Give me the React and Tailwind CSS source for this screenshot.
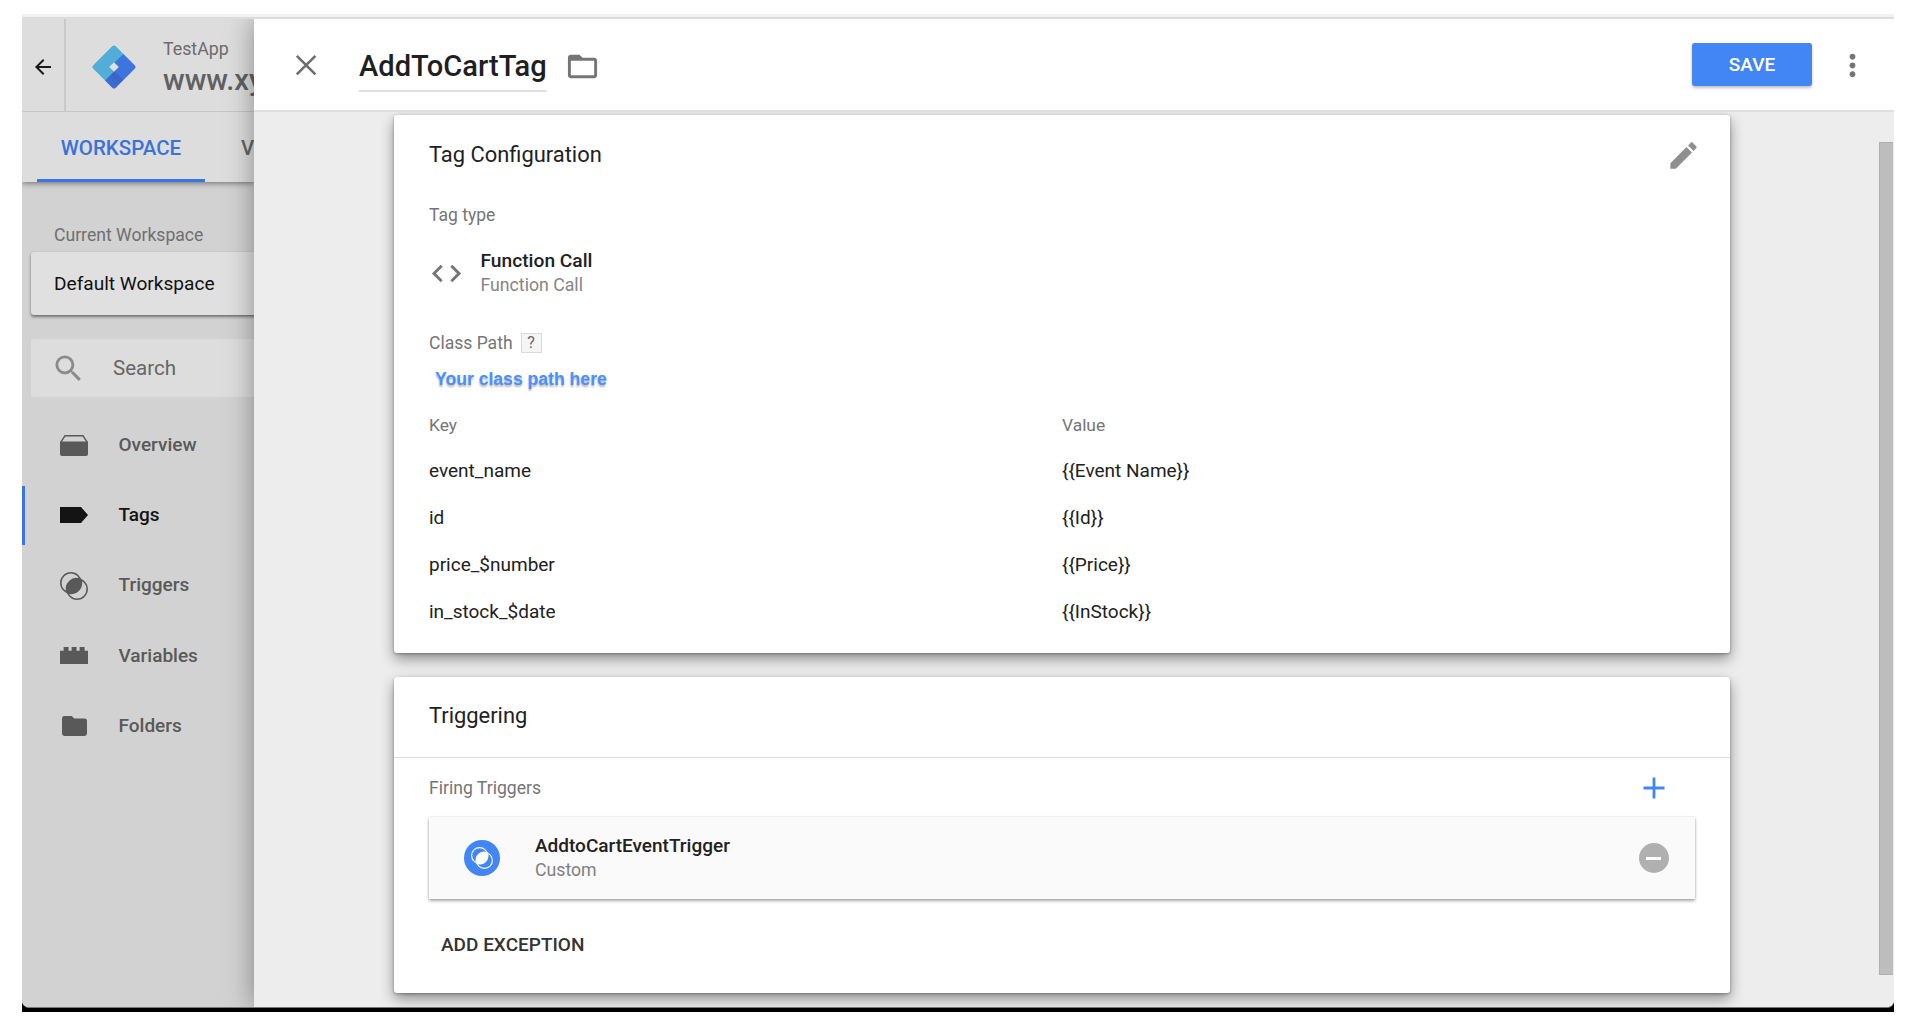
const ROWS = [
  ["event_name", "{{Event Name}}"],
  ["id", "{{Id}}"],
  ["price_$number", "{{Price}}"],
  ["in_stock_$date", "{{InStock}}"],
];

function Icon({ className = "", children }) {
  return (
    <svg viewBox="0 0 24 24" fill="currentColor" className={`size-[35px] shrink-0 ${className}`}>
      {children}
    </svg>
  );
}

function Logo() {
  return (
    <svg viewBox="0 0 44 44" className="size-11 shrink-0">
      <defs>
        <linearGradient id="logoShade" gradientUnits="userSpaceOnUse" x1="14" y1="38" x2="38" y2="14">
          <stop offset="0" stopColor="#3b6fd8" />
          <stop offset="0.38" stopColor="#3a64c4" />
          <stop offset="0.46" stopColor="#3d74dc" />
          <stop offset="1" stopColor="#3f74df" />
        </linearGradient>
      </defs>
      <path d="M31.2 8.8 42.7 20.2Q44.4 22 42.7 23.8L23.8 42.7Q22 44.4 20.2 42.7L13 35.5 15 22 22 15Z" fill="url(#logoShade)" />
      <path d="M20.2 1.3Q22 -.4 23.8 1.3L31.4 8.9 22 18 18 22 22 26.4 13.1 35.5 1.3 23.8Q-.4 22 1.3 20.2Z" fill="#52add9" />
      <path d="m22 17.2 4.8 4.8-4.8 4.8-4.8-4.8Z" fill="#e0e0e0" />
    </svg>
  );
}

/* Two overlapping rings with a filled intersection */
function Rings({ className }) {
  return (
    <svg viewBox="0 0 28 28" className={className} fill="none" stroke="currentColor" strokeWidth="1.5">
      <circle cx="10.9" cy="10.9" r="10.1" />
      <circle cx="17.1" cy="17.1" r="10.1" />
      <path d="M20.6 7.4A10.1 10.1 0 0 0 7.4 20.6 10.1 10.1 0 0 0 20.6 7.4Z" fill="currentColor" />
    </svg>
  );
}

const OverviewIcon = () => (
  <svg viewBox="0 0 28 21" className="h-[21px] w-7" fill="currentColor">
    <path d="M0 6.6h28V19q0 2-2 2H2q-2 0-2-2Z" />
    <path d="M.7 7.4 5 .8h18l4.3 6.6" fill="none" stroke="currentColor" strokeWidth="1.4" />
  </svg>
);
const TagIcon = () => (
  <svg viewBox="0 0 28 16" className="h-4 w-7" fill="currentColor">
    <path d="M0 0h21l7 8-7 8H0Z" />
  </svg>
);
const VariablesIcon = () => (
  <svg viewBox="0 0 28 17" className="h-[17px] w-7" fill="currentColor">
    <path d="M0 3.7h3.6V0h5v3.7h3V0h5v3.7h3V0h5v3.7H28V17H0Z" />
  </svg>
);
const FolderIcon = () => (
  <svg viewBox="0 0 25 20" className="h-5 w-[25px]" fill="currentColor">
    <path d="M2.4 0h7.4l2.4 2.4h10.4Q25 2.4 25 4.8v12.8Q25 20 22.6 20H2.4Q0 20 0 17.6V2.4Q0 0 2.4 0Z" />
  </svg>
);

const NAV = [
  { label: "Overview", icon: <OverviewIcon /> },
  { label: "Tags", icon: <TagIcon />, active: true },
  { label: "Triggers", icon: <Rings className="size-7" /> },
  { label: "Variables", icon: <VariablesIcon /> },
  { label: "Folders", icon: <FolderIcon /> },
];

function Sidebar() {
  return (
    <aside className="flex w-[232px] shrink-0 flex-col overflow-hidden bg-[#d2d2d2] whitespace-nowrap">
      <div className="z-10 bg-[#dddddd] shadow-[0_1px_6px_rgba(0,0,0,0.5)]">
        <div className="flex h-[93px] border-b border-[#c6c6c6]">
          <div className="flex w-[44px] shrink-0 items-center border-r-2 border-[#c9c9c9] pt-[3px] pl-[9px]">
            <svg viewBox="0 0 24 24" fill="#1a1a1a" className="size-6">
              <path d="M20 11H7.83l5.59-5.59L12 4l-8 8 8 8 1.41-1.41L7.83 13H20v-2z" />
            </svg>
          </div>
          <div className="flex w-[188px] shrink-0 items-center pt-[3px] pl-[26px]">
            <Logo />
            <div className="ml-[27px] pt-[5px] text-[#6c6c6c]">
              <div className="-mt-[6px] text-[17.8px] leading-[26px]">TestApp</div>
              <div className="mt-px text-[29.2px] leading-[34px] font-medium text-[#616161]">www.xy</div>
            </div>
          </div>
        </div>
        <div className="flex h-[70px] pl-[15px] text-[20.5px] font-medium">
          <div className="flex w-[168px] shrink-0 items-center justify-center border-b-[3px] border-[#3a76e3] pt-[5px] text-[#3a72d8]">WORKSPACE</div>
          <div className="flex shrink-0 items-center border-b-[3px] border-transparent pt-[5px] pl-[36px] text-[#666]">V</div>
        </div>
      </div>

      <div className="pl-[9px]">
        <div className="mt-[41px] pl-[23px] text-[17.6px] leading-6 text-[#6f6f6f]">Current Workspace</div>
        <div className="mt-[5px] flex h-[63px] w-[300px] items-center rounded-[3px] bg-[#e0e0e0] pt-[2px] pl-[23px] text-[19.1px] text-[#111] shadow-[0_2px_3px_rgba(0,0,0,0.45),0_0_1px_rgba(0,0,0,0.2)]">
          Default Workspace
        </div>
        <div className="mt-[24px] flex h-[58px] w-[300px] items-center rounded-[3px] bg-[#dddddd] pl-5 text-[20.5px] text-[#666]">
          <Icon className="text-[#8b8b8b]">
            <path d="M15.5 14h-.79l-.28-.27A6.471 6.471 0 0 0 16 9.5 6.5 6.5 0 1 0 9.5 16c1.61 0 3.09-.59 4.23-1.57l.27.28v.79l5 4.99L20.49 19l-4.99-5zm-6 0C7.01 14 5 11.99 5 9.5S7.01 5 9.5 5 14 7.01 14 9.5 11.99 14 9.5 14z" />
          </Icon>
          <span className="ml-[27px]">Search</span>
        </div>
      </div>

      <nav className="mt-[19px] flex flex-col gap-[11.7px]">
        {NAV.map(({ label, icon, active }) => (
          <div
            key={label}
            className={`flex h-[58.5px] items-center border-l-[3px] pl-[31.5px] text-[19px] font-medium ${active ? "border-[#3a76e3] text-[#141414]" : "border-transparent text-[#595959]"}`}
          >
            <span className="flex w-[35px] justify-center">{icon}</span>
            <span className="ml-[27px]">{label}</span>
          </div>
        ))}
      </nav>
    </aside>
  );
}

function DrawerHeader() {
  return (
    <header className="flex h-[93px] shrink-0 items-center border-b-2 border-[#e0e0e0] bg-white pr-[24px] pl-[34px]">
      <svg viewBox="0 0 36 36" className="size-9 text-[#6e6e6e]" fill="none" stroke="currentColor" strokeWidth="2.6">
        <path d="m8.8 8.8 18.6 18.6M27.4 8.8 8.8 27.4" />
      </svg>
      <h1 className="mt-[4px] ml-[35px] h-[50px] border-b-2 border-[#e0e0e0] text-[29.1px] leading-[48px] font-medium text-[#1f1f1f]">AddToCartTag</h1>
      <Icon className="mt-[3px] ml-[18px] text-[#757575]">
        <path d="M20 6h-8l-2-2H4c-1.1 0-1.99.9-1.99 2L2 18c0 1.1.9 2 2 2h16c1.1 0 2-.9 2-2V8c0-1.1-.9-2-2-2zm0 12H4V8h16v10z" />
      </Icon>
      <button className="ml-auto h-[43px] w-[120px] rounded-[3px] bg-[#4285f4] pt-[2px] text-[19px] font-medium text-white shadow-[0_2px_3px_rgba(0,0,0,0.25)]">SAVE</button>
      <Icon className="mt-px ml-[23px] text-[#757575]">
        <path d="M12 8c1.1 0 2-.9 2-2s-.9-2-2-2-2 .9-2 2 .9 2 2 2zm0 2c-1.1 0-2 .9-2 2s.9 2 2 2 2-.9 2-2-.9-2-2-2zm0 6c-1.1 0-2 .9-2 2s.9 2 2 2 2-.9 2-2-.9-2-2-2z" />
      </Icon>
    </header>
  );
}

function TagConfiguration() {
  return (
    <section className="h-[538px] rounded-[3px] bg-white px-[35px] pt-[25px] shadow-[0_6px_14px_rgba(0,0,0,0.4),0_1px_3px_rgba(0,0,0,0.3)]">
      <div className="flex h-[30px] items-center justify-between">
        <h2 className="text-[21.9px] leading-[30px] text-[#212121]">Tag Configuration</h2>
        <Icon className="mt-px -mr-[5.5px] text-[#8f8f8f]">
          <path d="M3 17.25V21h3.75L17.81 9.94l-3.75-3.75L3 17.25zM20.71 7.04c.39-.39.39-1.02 0-1.41l-2.34-2.34c-.39-.39-1.02-.39-1.41 0l-1.83 1.83 3.75 3.75 1.83-1.83z" />
        </Icon>
      </div>
      <div className="mt-[33px] text-[17.5px] leading-6 text-[#757575]">Tag type</div>
      <div className="mt-[22px] flex items-center">
        <Icon className="text-[#757575]">
          <path d="M9.4 16.6 4.8 12l4.6-4.6L8 6l-6 6 6 6 1.4-1.4zm5.2 0 4.6-4.6-4.6-4.6L16 6l6 6-6 6-1.4-1.4z" />
        </Icon>
        <div className="ml-[16.5px]">
          <div className="text-[19.2px] leading-6 font-medium text-[#212121]">Function Call</div>
          <div className="text-[17.7px] leading-6 text-[#858585]">Function Call</div>
        </div>
      </div>
      <div className="mt-[34px] flex h-6 items-center text-[17.55px] leading-6 text-[#757575]">
        Class Path
        <span className="ml-[8px] flex h-5 w-[21px] items-center justify-center border border-[#dadada] bg-[#f5f5f5] text-[16px] text-[#666]">?</span>
      </div>
      <div className="mt-3 pl-[6px] font-['Liberation_Sans'] text-[17.6px] leading-6 font-bold text-[#4a90ff] [text-shadow:0_2px_2px_rgba(0,0,0,0.3)]">Your class path here</div>
      <div className="mt-[22px] grid grid-cols-2 text-[17.4px] leading-6 text-[#757575]">
        <span>Key</span>
        <span>Value</span>
      </div>
      <div className="mt-[11px] text-[19px] text-[#212121]">
        {ROWS.map(([key, value]) => (
          <div key={key} className="grid h-[46.9px] grid-cols-2 items-center">
            <span>{key}</span>
            <span>{value}</span>
          </div>
        ))}
      </div>
    </section>
  );
}

function Triggering() {
  return (
    <section className="mt-6 h-[316px] rounded-[3px] bg-white shadow-[0_6px_14px_rgba(0,0,0,0.4),0_1px_3px_rgba(0,0,0,0.3)]">
      <div className="flex h-[81px] items-center border-b border-[#dcdcdc] px-[35px] pb-[2px] text-[21.9px] text-[#212121]">Triggering</div>
      <div className="px-[35px] pt-[18px]">
        <div className="flex h-6 items-center justify-between text-[17.6px] text-[#757575]">
          Firing Triggers
          <svg viewBox="0 0 22 22" className="mr-[30.5px] size-[22px] text-[#4285f4]" fill="none" stroke="currentColor" strokeWidth="2.8">
            <path d="M.5 11h21M11 .5v21" />
          </svg>
        </div>
        <div className="mt-[17px] flex h-[82px] items-center bg-[#fafafa] pr-[26.5px] pl-[35px] shadow-[0_2px_3px_rgba(0,0,0,0.32),0_0_2px_rgba(0,0,0,0.15)]">
          <span className="flex size-9 items-center justify-center rounded-full bg-[#4285f4] text-white">
            <Rings className="size-[22px]" />
          </span>
          <div className="ml-[35px]">
            <div className="text-[19px] leading-6 font-medium text-[#212121]">AddtoCartEventTrigger</div>
            <div className="text-[17.7px] leading-6 text-[#808080]">Custom</div>
          </div>
          <span className="ml-auto flex size-[30px] items-center justify-center rounded-full bg-[#b0b0b0]">
            <span className="h-[3px] w-[15px] bg-white" />
          </span>
        </div>
        <button className="mt-[34px] ml-[12px] block text-[19px] leading-6 font-medium text-[#333]">ADD EXCEPTION</button>
      </div>
    </section>
  );
}

export default function App() {
  return (
    <div className="h-[1026px] w-[1916px] overflow-hidden bg-white pt-[14px] pl-[22px] font-[Roboto,sans-serif]">
      <div className="h-[998px] w-[1872px] bg-black">
        <div className="flex h-[994px] flex-col overflow-hidden rounded-b-[7px] border-b border-[#777] bg-[#eeeeee]">
          <div className="h-[5px] shrink-0 border-b-2 border-[#dcdcdc] bg-[#f1f1f1]" />
          <div className="flex min-h-0 flex-1 overflow-hidden">
            <Sidebar />
            <main className="z-20 flex min-w-0 flex-1 flex-col bg-[#ededed] shadow-[0_0_26px_rgba(0,0,0,0.38)]">
              <DrawerHeader />
              <div className="flex min-h-0 flex-1 justify-between overflow-hidden">
                <div className="ml-[140px] w-[1336px] pt-[3px]">
                  <TagConfiguration />
                  <Triggering />
                </div>
                <div className="mt-[30px] mr-px h-[833px] w-[14px] border border-r-0 border-[#b0b0b0] bg-[#bdbdbd]" />
              </div>
            </main>
          </div>
        </div>
      </div>
    </div>
  );
}
